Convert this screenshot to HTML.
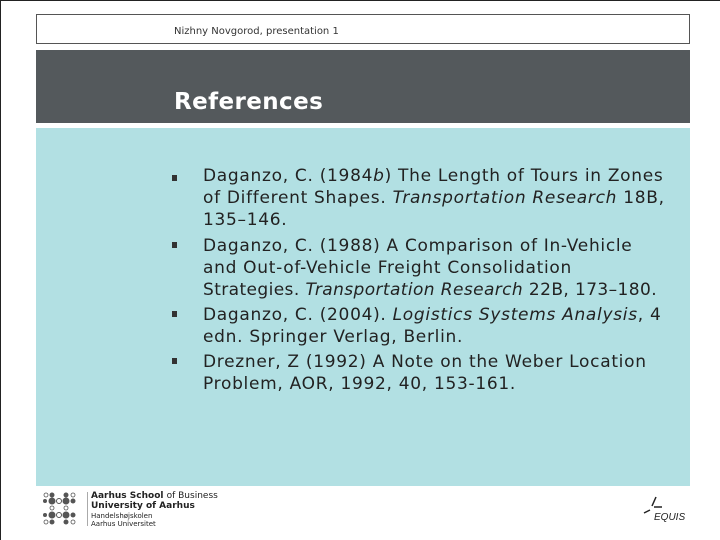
<!DOCTYPE html>
<html><head><style>
body{margin:0;width:720px;height:540px;background:#fff;position:relative;overflow:hidden;font-family:"DejaVu Sans","Liberation Sans",sans-serif;}
.edge{position:absolute;left:0;top:0;width:1px;height:540px;background:#222}
.edget{position:absolute;left:0;top:0;width:720px;height:1px;background:#222}
.hdr{position:absolute;left:36px;top:14px;width:652px;height:28px;border:1px solid #555;}
.hdr span{position:absolute;left:137px;top:11px;font-size:10px;color:#333;}
.band{position:absolute;left:36px;top:50px;width:654px;height:73px;background:#54595c;}
.band h1{position:absolute;left:138px;top:39px;margin:0;font-size:23px;letter-spacing:.4px;color:#fff;font-weight:bold;}
.body{position:absolute;left:36px;top:128px;width:654px;height:358px;background:#b2e0e3;}
.l{position:absolute;left:203px;font-size:17px;letter-spacing:.7px;color:#222;white-space:nowrap;line-height:20px}
.b{position:absolute;left:172px;width:5px;height:6px;background:#333}
.logo{position:absolute;left:42px;top:492px;}
.ft{position:absolute;left:91px;font-size:9px;color:#222;}
</style></head><body>
<div class="edge"></div><div class="edget"></div>
<div class="hdr"><span>Nizhny Novgorod, presentation 1</span></div>
<div class="band"><h1>References</h1></div>
<div class="body"></div>
<div class="b" style="top:175px"></div>
<div class="b" style="top:242px"></div>
<div class="b" style="top:311px"></div>
<div class="b" style="top:358px"></div>
<div class="l" style="top:166px">Daganzo, C. (1984<i>b</i>) The Length of Tours in Zones</div>
<div class="l" style="top:188px">of Different Shapes. <i>Transportation Research</i> 18B,</div>
<div class="l" style="top:210px">135–146.</div>
<div class="l" style="top:236px">Daganzo, C. (1988) A Comparison of In-Vehicle</div>
<div class="l" style="top:258px">and Out-of-Vehicle Freight Consolidation</div>
<div class="l" style="top:280px;letter-spacing:.4px">Strategies. <i>Transportation Research</i> 22B, 173–180.</div>
<div class="l" style="top:305px">Daganzo, C. (2004). <i>Logistics Systems Analysis</i>, 4</div>
<div class="l" style="top:327px">edn. Springer Verlag, Berlin.</div>
<div class="l" style="top:352px">Drezner, Z (1992) A Note on the Weber Location</div>
<div class="l" style="top:374px">Problem, AOR, 1992, 40, 153-161.</div>
<svg class="logo" width="40" height="34" viewBox="0 0 40 34" fill="#555">
<circle cx="4" cy="3" r="2" fill="none" stroke="#555" stroke-width=".8"/><circle cx="10" cy="3" r="2.5"/><circle cx="24" cy="3" r="2.5"/><circle cx="31" cy="3" r="2" fill="none" stroke="#555" stroke-width=".8"/>
<circle cx="3" cy="9" r="2"/><circle cx="10" cy="9" r="3.5"/><circle cx="17" cy="9" r="2.5" fill="none" stroke="#555"/><circle cx="24" cy="9" r="3.5"/><circle cx="31" cy="9" r="2.5"/>
<circle cx="10" cy="16" r="2" fill="none" stroke="#555" stroke-width=".8"/><circle cx="24" cy="16" r="2" fill="none" stroke="#555" stroke-width=".8"/>
<circle cx="3" cy="23" r="2"/><circle cx="10" cy="23" r="3.5"/><circle cx="17" cy="23" r="2.5" fill="none" stroke="#555"/><circle cx="24" cy="23" r="3.5"/><circle cx="31" cy="23" r="2.5"/>
<circle cx="4" cy="30" r="2" fill="none" stroke="#555" stroke-width=".8"/><circle cx="10" cy="30" r="2.5"/><circle cx="24" cy="30" r="2.5"/><circle cx="31" cy="30" r="2" fill="none" stroke="#555" stroke-width=".8"/>
</svg>
<div style="position:absolute;left:87px;top:492px;width:1px;height:34px;background:#aaa"></div>
<div class="ft" style="top:491px;font-weight:bold">Aarhus School <span style="font-weight:normal">of Business</span></div>
<div class="ft" style="top:501px;font-weight:bold">University of Aarhus</div>
<div class="ft" style="top:512px;font-size:7px">Handelshøjskolen</div>
<div class="ft" style="top:520px;font-size:7px">Aarhus Universitet</div>
<svg style="position:absolute;left:640px;top:494px" width="50" height="34">
<path d="M16 3 L12 12 M14 13 L22 13 M10 16 L4 19" stroke="#222" stroke-width="1.5" fill="none"/>
<text x="14" y="26" font-size="10" font-style="italic" font-family="Liberation Sans" fill="#222">EQUIS</text>
</svg>
</body></html>
